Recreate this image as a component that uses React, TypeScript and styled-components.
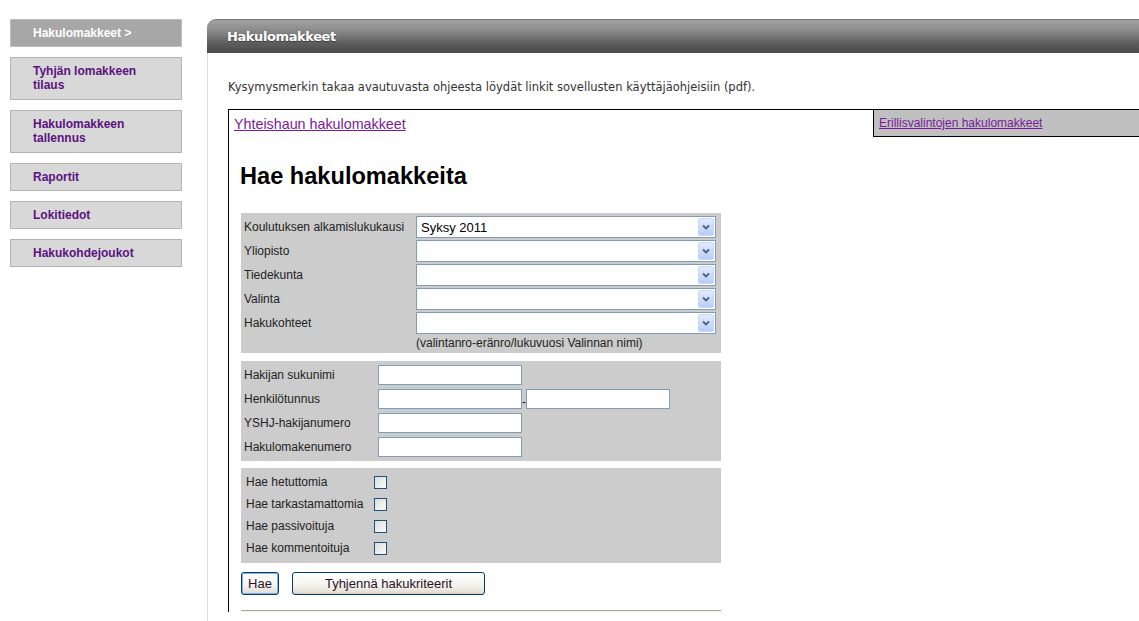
import React from "react";
import styled, { createGlobalStyle } from "styled-components";

const Global = createGlobalStyle`
  html, body { margin: 0; padding: 0; background: #fff; }
  body { font-family: "Liberation Sans", Arial, sans-serif; overflow: hidden; }
`;

const Page = styled.div`
  display: flex;
  align-items: stretch;
  padding: 19px 0 0 10px;
  height: 621px;
  box-sizing: border-box;
  overflow: hidden;
`;

const Nav = styled.nav`
  width: 172px;
  flex: none;
  display: flex;
  flex-direction: column;
  gap: 10px;
`;

const NavItem = styled.a<{ $active?: boolean; $lines?: number }>`
  display: block;
  box-sizing: border-box;
  padding: 6px 8px ${(p) => (p.$lines === 2 ? 7 : 6)}px 22px;
  font: bold 12px/14px "Liberation Sans", Arial, sans-serif;
  text-decoration: none;
  background: ${(p) => (p.$active ? "#a7a7a7" : "#d8d8d8")};
  border: 1px solid ${(p) => (p.$active ? "#bdbdbd" : "#b4b4b4")};
  color: ${(p) => (p.$active ? "#fff" : "#5b127f")};
`;

const Main = styled.main`
  flex: 1;
  min-width: 0;
  margin-left: 25px;
  display: flex;
  flex-direction: column;
`;

const TitleBar = styled.header`
  height: 34px;
  flex: none;
  box-sizing: border-box;
  border-top-left-radius: 9px;
  border-top: 1px solid #767676;
  background: linear-gradient(#a2a2a2, #8c8c8c 30%, #5c5c5c 72%, #4b4b4b);
  display: flex;
  align-items: center;
  padding-left: 20px;
  color: #fff;
  font: bold 13px "DejaVu Sans", Verdana, sans-serif;
  letter-spacing: -0.4px;
  text-shadow: 0 1px 1px rgba(0, 0, 0, 0.45);
`;

const Content = styled.div`
  flex: 1;
  border-left: 1px solid #dcdcdc;
  padding: 27px 0 0 20px;
`;

const Intro = styled.p`
  margin: 0;
  font: 11.5px/14px "DejaVu Sans", Verdana, sans-serif;
  color: #333;
`;

const TabBox = styled.section`
  margin-top: 15px;
  border-top: 1px solid #000;
  border-left: 1px solid #000;
`;

const TabRow = styled.div`
  display: flex;
  height: 27px;
`;

const Tab = styled.div<{ $active?: boolean }>`
  box-sizing: border-box;
  display: flex;
  align-items: center;
  padding-left: 5px;
  flex: ${(p) => (p.$active ? "1" : "none")};
  width: ${(p) => (p.$active ? "auto" : "266px")};
  background: ${(p) => (p.$active ? "#fff" : "#c0c0c0")};
  border-left: ${(p) => (p.$active ? "none" : "1px solid #000")};
  border-bottom: ${(p) => (p.$active ? "none" : "1px solid #000")};
  font: ${(p) => (p.$active ? "14.3px" : "12px")} "Liberation Sans", Arial, sans-serif;
`;

const TabLink = styled.a`
  color: #7a1a9c;
  text-decoration: underline;
`;

const Panel = styled.div`
  padding-left: 12px;
`;

const Heading = styled.h1`
  margin: 26px 0 23px -1px;
  font: bold 23.6px/27px "Liberation Sans", Arial, sans-serif;
  color: #000;
`;

const Form = styled.form`
  width: 480px;
  display: flex;
  flex-direction: column;
`;

const SelectSection = styled.div`
  background: #cccccc;
  padding: 3px 5px 2px 3px;
  display: grid;
  grid-template-columns: 172px 300px;
  row-gap: 2px;
  align-items: center;
`;

const FieldSection = styled.div`
  background: #cccccc;
  margin-top: 8px;
  padding: 4px 0 4px 3px;
  display: grid;
  grid-template-columns: 134px 144px 4px 144px;
  row-gap: 4px;
  align-items: center;
`;

const CheckSection = styled.div`
  background: #cccccc;
  margin-top: 7px;
  padding: 3px 0 4px 5px;
  display: grid;
  grid-template-columns: 128px 13px;
  grid-auto-rows: 22px;
  align-items: center;
`;

const Label = styled.label`
  font: 12px/16px "Liberation Sans", Arial, sans-serif;
  color: #222;
  white-space: nowrap;
`;

const Hint = styled.div`
  grid-column: 2;
  font: 12px/15px "Liberation Sans", Arial, sans-serif;
  color: #222;
`;

const Dash = styled.span`
  font: 12px "Liberation Sans", Arial, sans-serif;
  color: #222;
  text-align: center;
  align-self: end;
  line-height: 14px;
`;

const SelectBox = styled.div`
  height: 22px;
  box-sizing: border-box;
  border: 1px solid #7f9db9;
  background: #fff;
  display: flex;
  align-items: center;
  justify-content: space-between;
  padding: 0 1px 0 4px;
  font: 13px "Liberation Sans", Arial, sans-serif;
  color: #000;
`;

const Arrow = styled.span`
  width: 16px;
  height: 18px;
  box-sizing: border-box;
  border: 1px solid #c6d6fc;
  border-radius: 2px;
  background: linear-gradient(#e3ebfe, #b8ccf8);
  display: flex;
  align-items: center;
  justify-content: center;
`;

const TextInput = styled.input`
  width: 144px;
  height: 20px;
  box-sizing: border-box;
  border: 1px solid #7f9db9;
  background: #fff;
  padding: 0 2px;
  margin: 0;
  font: 12px "Liberation Sans", Arial, sans-serif;
`;

const Check = styled.input`
  appearance: none;
  width: 13px;
  height: 13px;
  margin: 0;
  box-sizing: border-box;
  border: 1px solid #1c5180;
  background: linear-gradient(135deg, #dcdcd7, #fbfbf9);
`;

const ButtonRow = styled.div`
  margin-top: 9px;
  display: flex;
  gap: 13px;
`;

const Button = styled.button<{ $w: number; $default?: boolean }>`
  width: ${(p) => p.$w}px;
  height: 23px;
  box-sizing: border-box;
  padding: 0;
  border: 1px solid #003c74;
  border-radius: 3px;
  background: linear-gradient(#ffffff, #f3f3ee 60%, #e4e1d6 90%, #d6d0c5);
  box-shadow: ${(p) => (p.$default ? "inset 0 0 0 1px #8aaef0" : "inset 0 -1px 0 #d6d0c5")};
  font: 13px "Liberation Sans", Arial, sans-serif;
  color: #2a0f2a;
`;

const Rule = styled.hr`
  width: 480px;
  margin: 15px 0 0;
  height: 0;
  border: 0;
  border-top: 1px solid #aca899;
  border-bottom: 1px solid #f1efe2;
`;

const ChevronDown = () => (
  <svg width="8" height="6" viewBox="0 0 8 6">
    <polyline points="1,1.5 4,4.5 7,1.5" fill="none" stroke="#4d6185" strokeWidth="1.8" />
  </svg>
);

const Select = ({ value }: { value?: string }) => (
  <SelectBox>
    <span>{value ?? ""}</span>
    <Arrow>
      <ChevronDown />
    </Arrow>
  </SelectBox>
);

const navItems: { label: React.ReactNode; active?: boolean; lines?: number }[] = [
  { label: "Hakulomakkeet >", active: true },
  { label: <>Tyhjän lomakkeen<br />tilaus</>, lines: 2 },
  { label: <>Hakulomakkeen<br />tallennus</>, lines: 2 },
  { label: "Raportit" },
  { label: "Lokitiedot" },
  { label: "Hakukohdejoukot" },
];

const selects = [
  { label: "Koulutuksen alkamislukukausi", value: "Syksy 2011" },
  { label: "Yliopisto" },
  { label: "Tiedekunta" },
  { label: "Valinta" },
  { label: "Hakukohteet" },
];

const checks = ["Hae hetuttomia", "Hae tarkastamattomia", "Hae passivoituja", "Hae kommentoituja"];

export default function App() {
  return (
    <>
      <Global />
      <Page>
        <Nav>
          {navItems.map((n, i) => (
            <NavItem key={i} href="#" $active={n.active} $lines={n.lines}>
              {n.label}
            </NavItem>
          ))}
        </Nav>
        <Main>
          <TitleBar>Hakulomakkeet</TitleBar>
          <Content>
            <Intro>
              Kysymysmerkin takaa avautuvasta ohjeesta löydät linkit sovellusten käyttäjäohjeisiin (pdf).
            </Intro>
            <TabBox>
              <TabRow>
                <Tab $active>
                  <TabLink href="#">Yhteishaun hakulomakkeet</TabLink>
                </Tab>
                <Tab>
                  <TabLink href="#">Erillisvalintojen hakulomakkeet</TabLink>
                </Tab>
              </TabRow>
              <Panel>
                <Heading>Hae hakulomakkeita</Heading>
                <Form onSubmit={(e) => e.preventDefault()}>
                  <SelectSection>
                    {selects.map((s) => (
                      <React.Fragment key={s.label}>
                        <Label>{s.label}</Label>
                        <Select value={s.value} />
                      </React.Fragment>
                    ))}
                    <Hint>(valintanro-eränro/lukuvuosi Valinnan nimi)</Hint>
                  </SelectSection>
                  <FieldSection>
                    <Label>Hakijan sukunimi</Label>
                    <TextInput />
                    <span />
                    <span />
                    <Label>Henkilötunnus</Label>
                    <TextInput />
                    <Dash>-</Dash>
                    <TextInput />
                    <Label>YSHJ-hakijanumero</Label>
                    <TextInput />
                    <span />
                    <span />
                    <Label>Hakulomakenumero</Label>
                    <TextInput />
                    <span />
                    <span />
                  </FieldSection>
                  <CheckSection>
                    {checks.map((c) => (
                      <React.Fragment key={c}>
                        <Label>{c}</Label>
                        <Check type="checkbox" />
                      </React.Fragment>
                    ))}
                  </CheckSection>
                  <ButtonRow>
                    <Button type="submit" $w={38} $default>
                      Hae
                    </Button>
                    <Button type="button" $w={193}>
                      Tyhjennä hakukriteerit
                    </Button>
                  </ButtonRow>
                  <Rule />
                </Form>
              </Panel>
            </TabBox>
          </Content>
        </Main>
      </Page>
    </>
  );
}
